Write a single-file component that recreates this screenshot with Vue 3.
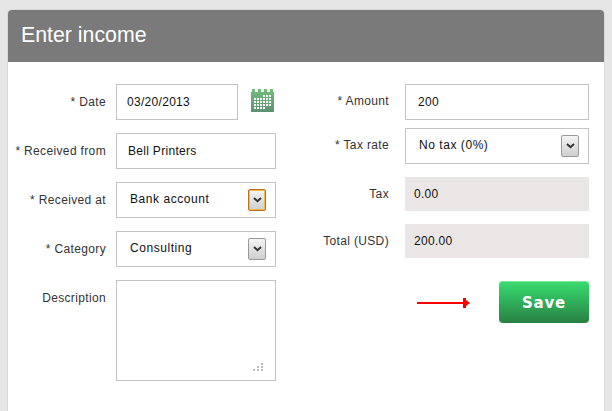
<script setup>
const dots = [[9,0],[9,3],[5,3],[1,6],[5,6],[9,6]]
const calCells = []
for (let r = 0; r < 5; r++) {
  for (let c = 0; c < 6; c++) {
    if ((r === 0 && c < 3) || (r === 4 && c > 3)) continue
    calCells.push([3 + c * 3, 6 + r * 3])
  }
}
</script>

<template>
  <div class="card">
    <header class="head">Enter income</header>
    <div class="body">
      <section class="col left">
        <div class="row">
          <label class="lbl">* Date</label>
          <div class="field date">03/20/2013</div>
          <svg class="cal" width="23" height="23" viewBox="0 0 23 23">
            <defs>
              <linearGradient id="calg" x1="0" y1="0" x2="0" y2="1">
                <stop offset="0" stop-color="#72bd7b" />
                <stop offset="1" stop-color="#5d9272" />
              </linearGradient>
            </defs>
            <path d="M1 0h3v3h3V0h3v3h3V0h3v3h3V0h3v3h1v20H0V3h1z" fill="url(#calg)" />
            <rect v-for="(p, i) in calCells" :key="i" :x="p[0]" :y="p[1]" width="2" height="2" fill="#fff" />
          </svg>
        </div>
        <div class="row">
          <label class="lbl">* Received from</label>
          <div class="field wide">Bell Printers</div>
        </div>
        <div class="row">
          <label class="lbl">* Received at</label>
          <div class="field wide select">
            <span>Bank account</span>
            <span class="btn focus">
              <svg width="9" height="6" viewBox="0 0 9 6"><path d="M1 1l3.5 3.2L8 1" fill="none" stroke="#333" stroke-width="2" /></svg>
            </span>
          </div>
        </div>
        <div class="row">
          <label class="lbl">* Category</label>
          <div class="field wide select">
            <span>Consulting</span>
            <span class="btn">
              <svg width="9" height="6" viewBox="0 0 9 6"><path d="M1 1l3.5 3.2L8 1" fill="none" stroke="#333" stroke-width="2" /></svg>
            </span>
          </div>
        </div>
        <div class="row">
          <label class="lbl">Description</label>
          <div class="field wide area">
            <svg class="grip" width="11" height="9" viewBox="0 0 11 9">
              <rect v-for="(d, i) in dots" :key="i" :x="d[0]" :y="d[1]" width="2" height="2" fill="#bdbdbd" />
            </svg>
          </div>
        </div>
      </section>

      <section class="col right">
        <div class="row r1">
          <label class="lbl rl">* Amount</label>
          <div class="field rwide plain">200</div>
        </div>
        <div class="row r2">
          <label class="lbl rl">* Tax rate</label>
          <div class="field rwide select">
            <span>No tax (0%)</span>
            <span class="btn">
              <svg width="9" height="6" viewBox="0 0 9 6"><path d="M1 1l3.5 3.2L8 1" fill="none" stroke="#333" stroke-width="2" /></svg>
            </span>
          </div>
        </div>
        <div class="row r3">
          <label class="lbl rl">Tax</label>
          <div class="ro">0.00</div>
        </div>
        <div class="row r3">
          <label class="lbl rl">Total (USD)</label>
          <div class="ro">200.00</div>
        </div>
        <div class="actions">
          <svg class="arrow" width="54" height="16" viewBox="0 0 54 16">
            <path d="M0 8h50" stroke="#f00" stroke-width="2" />
            <path d="M46 3h3v2l4 3-4 3v2h-3z" fill="#f00" />
          </svg>
          <button class="save">Save</button>
        </div>
      </section>
    </div>
  </div>
</template>

<style>
html, body { margin: 0; background: #e6e6e6; }
body { height: 411px; overflow: hidden; }
</style>

<style scoped>
.card {
  margin: 10px 8px 0;
  height: 401px;
  background: #fff;
  border-radius: 4px 4px 0 0;
  box-shadow: 0 0 0 1px #d9d9d9;
  overflow: hidden;
  font-family: "Liberation Sans", Arial, sans-serif;
  font-size: 12px;
  color: #111;
}
.head {
  height: 52px;
  box-sizing: border-box;
  background: #7a7a7a;
  color: #fff;
  font-size: 21.3px;
  line-height: 51px;
  padding-left: 13px;
}
.body { display: flex; padding-top: 22px; }
.col { display: flex; flex-direction: column; }
.left { width: 268px; gap: 13px; }
.right { margin-left: 14px; }
.row { display: flex; align-items: flex-start; }
.lbl {
  width: 98px;
  text-align: right;
  line-height: 36px;
  color: #333;
  letter-spacing: 0.35px;
  flex: none;
}
.rl { width: 99px; margin-right: 16px; line-height: 35px; }
.left .lbl { margin-right: 10px; }
.field {
  box-sizing: border-box;
  height: 36px;
  border: 1px solid #c4c4c4;
  background: #fff;
  line-height: 35px;
  padding-left: 11px;
  letter-spacing: 0.3px;
}
.date { width: 122px; padding-left: 10px; }
.wide { width: 160px; }
.rwide { width: 184px; }
.plain { padding-left: 12px; }
.cal { margin: 5px 0 0 13px; }
.select {
  display: flex;
  align-items: center;
  justify-content: space-between;
  padding-left: 13px;
  padding-right: 9px;
  line-height: 30px;
}
.select > span:first-child { margin-top: -3px; letter-spacing: 0.55px; }
.btn {
  box-sizing: border-box;
  width: 18px;
  height: 22px;
  border: 1px solid #9a9a9a;
  border-radius: 2px;
  background: linear-gradient(#f4f4f4, #cfcfcf);
  display: flex;
  align-items: center;
  justify-content: center;
}
.btn.focus {
  border-color: #b8701a;
  box-shadow: inset 0 0 0 1px #f8b850;
}
.area { height: 101px; position: relative; }
.grip { position: absolute; right: 12px; bottom: 8px; }
.r1 { margin-bottom: 8px; }
.r2 { margin-bottom: 13px; }
.r3 { margin-bottom: 13px; }
.r3 .lbl { line-height: 34px; }
.ro {
  width: 184px;
  height: 34px;
  box-sizing: border-box;
  background: #ebe6e6;
  line-height: 35px;
  padding-left: 9px;
  letter-spacing: 0.3px;
}
.actions { display: flex; align-items: flex-start; margin-top: 10px; }
.arrow { margin: 14px 0 0 127px; flex: none; }
.save {
  width: 90px;
  height: 42px;
  margin-left: 28px;
  flex: none;
  padding: 2px 0 0;
  border: 0;
  border-radius: 4px;
  background: linear-gradient(#3bdc6f 0%, #30b45c 45%, #2a7f43 100%);
  box-shadow: inset 0 1px 0 #7fe89f;
  color: #fff;
  font-family: "DejaVu Sans", sans-serif;
  font-size: 15px;
  font-weight: 700;
  letter-spacing: 0.8px;
}
</style>
